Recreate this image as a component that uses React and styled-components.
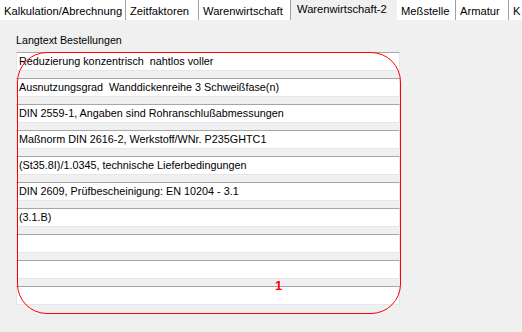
import React from "react";
import styled, { createGlobalStyle } from "styled-components";

const GlobalStyle = createGlobalStyle`
  html, body {
    margin: 0;
    padding: 0;
    background: #f0f0f0;
  }
  body {
    font-family: "Liberation Sans", Arial, sans-serif;
  }
`;

const Window = styled.div`
  width: 522px;
  height: 332px;
  overflow: hidden;
  background: #f0f0f0;
  display: flex;
  flex-direction: column;
`;

const TabBar = styled.div`
  display: flex;
  height: 21px;
  background: #f0f0f0;
  white-space: nowrap;
`;

const Tab = styled.div`
  flex: none;
  width: ${props => props.w}px;
  height: ${props => (props.active ? 21 : 20)}px;
  box-sizing: border-box;
  padding-left: ${props => (props.active ? 6 : 3)}px;
  font-size: 11.2px;
  line-height: ${props => (props.active ? 18 : 23)}px;
  color: #000;
  background: ${props => (props.active ? "#f0f0f0" : "#ffffff")};
  border-left: ${props => (props.active ? "none" : "1px solid #ffffff")};
  border-right: ${props => (props.active ? "none" : "1px solid #a0a0a0")};
  overflow: hidden;
`;

const Page = styled.div`
  flex: 1;
  padding: 13px 0 0 16px;
`;

const Label = styled.div`
  font-size: 10.7px;
  line-height: 13px;
  color: #000;
  margin-bottom: 5px;
`;

const FieldList = styled.div`
  position: relative;
  width: 384px;
  display: flex;
  flex-direction: column;
  gap: 7px;
`;

const Field = styled.div`
  height: 19px;
  box-sizing: border-box;
  background: #fff;
  border: 1px solid #e3e6ea;
  border-top-color: #a6a6a6;
  padding-left: 2px;
  font-size: 10.8px;
  line-height: 17px;
  color: #000;
  white-space: pre;
  overflow: hidden;
`;

const Marker = styled.div`
  position: absolute;
  left: 1px;
  top: 0;
  width: 384px;
  height: 262px;
  box-sizing: border-box;
  border: 1.3px solid #ff0000;
  border-radius: 30px;
  pointer-events: none;
`;

const MarkerNumber = styled.span`
  position: absolute;
  left: 259px;
  top: 226px;
  font-size: 13px;
  font-weight: bold;
  color: #ff0000;
`;

const tabs = [
  { label: "Kalkulation/Abrechnung", w: 126 },
  { label: "Zeitfaktoren", w: 73 },
  { label: "Warenwirtschaft", w: 92 },
  { label: "Warenwirtschaft-2", w: 106, active: true },
  { label: "Meßstelle", w: 59 },
  { label: "Armatur", w: 53 },
  { label: "K", w: 20 },
];

const lines = [
  "Reduzierung konzentrisch  nahtlos voller",
  "Ausnutzungsgrad  Wanddickenreihe 3 Schweißfase(n)",
  "DIN 2559-1, Angaben sind Rohranschlußabmessungen",
  "Maßnorm DIN 2616-2, Werkstoff/WNr. P235GHTC1",
  "(St35.8I)/1.0345, technische Lieferbedingungen",
  "DIN 2609, Prüfbescheinigung: EN 10204 - 3.1",
  "(3.1.B)",
  "",
  "",
  "",
];

const App = () => {
  return (
    <Window>
      <GlobalStyle />
      <TabBar>
        {tabs.map(t => (
          <Tab key={t.label} w={t.w} active={t.active}>
            {t.label}
          </Tab>
        ))}
      </TabBar>
      <Page>
        <Label>Langtext Bestellungen</Label>
        <FieldList>
          {lines.map((text, i) => (
            <Field key={i}>{text}</Field>
          ))}
          <Marker />
          <MarkerNumber>1</MarkerNumber>
        </FieldList>
      </Page>
    </Window>
  );
};

export default App;
